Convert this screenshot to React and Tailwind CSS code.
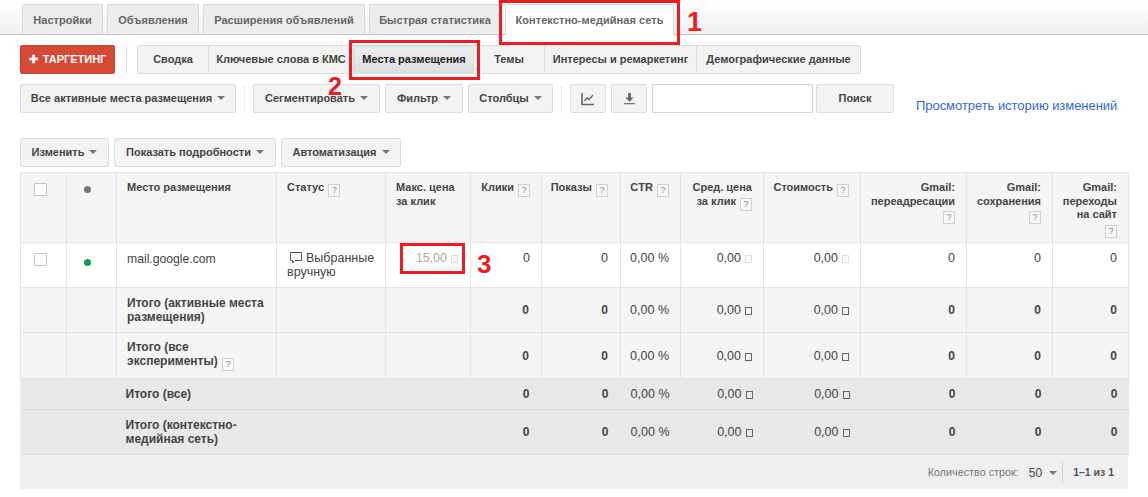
import React from "react";

const tabs = [
  { label: "Настройки", w: "w-[81px]" },
  { label: "Объявления", w: "w-[92px]" },
  { label: "Расширения объявлений", w: "w-[162px]" },
  { label: "Быстрая статистика", w: "w-[132px]" },
  { label: "Контекстно-медийная сеть", w: "w-[169px]", active: true },
];

const subTabs = [
  { label: "Сводка", w: "w-[71px]" },
  { label: "Ключевые слова в КМС", w: "w-[145px]" },
  { label: "Места размещения", w: "w-[120px]", active: true },
  { label: "Темы", w: "w-[71px]" },
  { label: "Интересы и ремаркетинг", w: "w-[152px]" },
  { label: "Демографические данные", w: "w-[163px]" },
];

const totals = [
  { label: <>Итого (активные места<br />размещения)</>, h: "h-[45px]", tone: "light" },
  { label: <>Итого (все<br />эксперименты) <Help /></>, h: "h-[46px]", tone: "light" },
  { label: "Итого (все)", h: "h-[31px]", tone: "dark" },
  { label: <>Итого (контекстно-<br />медийная сеть)</>, h: "h-[45px]", tone: "dark" },
];

function Help() {
  return (
    <span className="inline-flex w-[12px] h-[13px] items-center justify-center border border-[#d0d0d0] bg-[#f8f8f8] text-[9px] leading-none font-normal text-[#888] align-[-2px] ml-[1px]">
      ?
    </span>
  );
}

function Tofu({ faint }) {
  return (
    <span
      className={`inline-block w-[7px] h-[8px] border ml-[4px] align-[-1px] ${
        faint ? "border-[#dcdcdc]" : "border-[#666]"
      }`}
    />
  );
}

function Caret() {
  return <span className="inline-block ml-[5px] border-x-[4px] border-t-[4px] border-x-transparent border-t-[#777] align-[2px]" />;
}

function Btn({ w, children }) {
  return (
    <button className={`${w} h-[29px] shrink-0 rounded-[2px] border border-[#dcdcdc] bg-[#f3f3f3] text-[11px] font-bold text-[#444]`}>
      {children}
    </button>
  );
}

function Check() {
  return <span className="block w-[13px] h-[13px] ml-[13px] border border-[#c4c4c4] bg-white rounded-[1px]" />;
}

const cell = "border border-[#e4e4e4] align-top";
const num = "text-[12.5px] text-right pt-[8px]";

export default function App() {
  return (
    <div className="relative w-[1148px] h-[497px] overflow-hidden bg-white font-['Liberation_Sans',Arial,sans-serif]">
      {/* tabs */}
      <div className="flex items-end gap-[4px] h-[35px] pl-[22px] border-b border-[#c8c8c8] bg-gradient-to-b from-white to-[#f0f0f0]">
        {tabs.map((tab) => (
          <div
            key={tab.label}
            className={`${tab.w} h-[30px] pt-[1px] flex items-center justify-center border border-b-0 border-[#d8d8d8] rounded-t-[2px] text-[11px] font-bold tracking-[0.05px] text-[#666] ${
              tab.active ? "bg-white h-[31px] -mb-[1px]" : "bg-[#ececec]"
            }`}
          >
            {tab.label}
          </div>
        ))}
      </div>

      {/* targeting + sub tabs */}
      <div className="flex items-stretch h-[29px] mt-[10px] ml-[20px]">
        <button className="w-[95px] rounded-[2px] bg-[#d64937] border border-[#c8432f] text-white text-[11px] font-bold flex items-center justify-center gap-[5px]">
          <span className="text-[11px] leading-none">✚</span>ТАРГЕТИНГ
        </button>
        <div className="w-px bg-[#e4e4e4] ml-[11px] mr-[10px]" />
        <div className="flex rounded-[2px] border border-[#dcdcdc] bg-[#f3f3f3]">
          {subTabs.map((tab) => (
            <div
              key={tab.label}
              className={`${tab.w} flex items-center justify-center border-r last:border-r-0 border-[#dcdcdc] text-[11px] font-bold ${
                tab.active
                  ? "bg-gradient-to-b from-[#eeeeee] to-[#dedede] text-[#222] border border-[#c4c4c4]"
                  : "text-[#444]"
              }`}
            >
              {tab.label}
            </div>
          ))}
        </div>
      </div>

      {/* filters */}
      <div className="flex items-start h-[29px] mt-[10px] ml-[20px]">
        <Btn w="w-[216px]">Все активные места размещения<Caret /></Btn>
        <div className="w-px h-[29px] bg-[#ececec] ml-[8px] mr-[8px]" />
        <Btn w="w-[127px]">Сегментировать<Caret /></Btn>
        <div className="w-[5px]" />
        <Btn w="w-[78px]">Фильтр<Caret /></Btn>
        <div className="w-[5px]" />
        <Btn w="w-[85px]">Столбцы<Caret /></Btn>
        <div className="w-px h-[29px] bg-[#ececec] ml-[8px] mr-[8px]" />
        <Btn w="w-[36px]">
          <svg viewBox="0 0 14 14" className="w-[14px] h-[14px] mx-auto" fill="none" stroke="#666" strokeWidth="1.3">
            <path d="M1 1v11.5h12" strokeWidth="1.6" />
            <path d="M3.5 9l2.5-3 2 1.5L12 3" />
          </svg>
        </Btn>
        <div className="w-[5px]" />
        <Btn w="w-[36px]">
          <svg viewBox="0 0 14 14" className="w-[13px] h-[13px] mx-auto" fill="#666">
            <path d="M5.500 1h3v5h3L7 10.500 2.500 6h3z" />
            <rect x="1" y="12" width="12" height="1.2" />
          </svg>
        </Btn>
        <div className="w-[5px]" />
        <input className="w-[161px] h-[29px] border border-[#d4d4d4] bg-white outline-none" />
        <div className="w-[3px]" />
        <Btn w="w-[78px]">Поиск</Btn>
        <a className="ml-[22px] mt-[14px] text-[13px] tracking-[-0.05px] leading-[15px] text-[#3367d6] whitespace-nowrap">
          Просмотреть историю изменений
        </a>
      </div>

      {/* bulk actions */}
      <div className="flex gap-[5px] h-[29px] mt-[25px] ml-[20px]">
        <Btn w="w-[89px]">Изменить<Caret /></Btn>
        <Btn w="w-[162px]">Показать подробности<Caret /></Btn>
        <Btn w="w-[120px]">Автоматизация<Caret /></Btn>
      </div>

      {/* table */}
      <div className="ml-[20px] mt-[5px] w-[1108px] bg-[#efefef] h-[317px]">
        <table className="table-fixed w-[1108px] border-collapse text-[12px] leading-[14px]">
          <colgroup>
            <col className="w-[46px]" /><col className="w-[50px]" /><col className="w-[160px]" /><col className="w-[109px]" />
            <col className="w-[85px]" /><col className="w-[71px]" /><col className="w-[79px]" /><col className="w-[60px]" />
            <col className="w-[83px]" /><col className="w-[97px]" /><col className="w-[106px]" /><col className="w-[86px]" /><col className="w-[76px]" />
          </colgroup>
          <thead>
            <tr className="h-[70px] bg-[#f5f5f5] text-[11px] leading-[13.5px] font-bold text-[#444]">
              <th className={`${cell} pt-[10px]`}><Check /></th>
              <th className={`${cell} pt-[13px]`}><span className="block w-[7px] h-[7px] ml-[17px] rounded-full bg-[#757575]" /></th>
              <th className={`${cell} text-left pl-[10px] pt-[8px]`}>Место размещения</th>
              <th className={`${cell} text-left pl-[10px] pt-[8px]`}>Статус <Help /></th>
              <th className={`${cell} text-left pl-[10px] pt-[8px]`}>Макс. цена<br />за клик</th>
              <th className={`${cell} text-right pr-[11px] pt-[8px]`}>Клики <Help /></th>
              <th className={`${cell} text-right pr-[12px] pt-[8px]`}>Показы <Help /></th>
              <th className={`${cell} text-right pr-[11px] pt-[8px]`}>CTR <Help /></th>
              <th className={`${cell} text-right pr-[11px] pt-[8px]`}>Сред. цена<br />за клик <Help /></th>
              <th className={`${cell} text-right pr-[11px] pt-[8px]`}>Стоимость <Help /></th>
              <th className={`${cell} text-right pr-[11px] pt-[8px]`}>Gmail:<br />переадресации<br /><Help /></th>
              <th className={`${cell} text-right pr-[11px] pt-[8px]`}>Gmail:<br />сохранения<br /><Help /></th>
              <th className={`${cell} text-right pr-[11px] pt-[8px]`}>Gmail:<br />переходы<br />на сайт<br /><Help /></th>
            </tr>
          </thead>
          <tbody>
            <tr className="h-[45px] bg-white text-[#444]">
              <td className={`${cell} pt-[10px]`}><Check /></td>
              <td className={`${cell} pt-[16px]`}><span className="block w-[7px] h-[7px] ml-[17px] rounded-full bg-[#0f9d58]" /></td>
              <td className={`${cell} pl-[10px] pt-[9px] text-[12.2px]`}>mail.google.com</td>
              <td className={`${cell} pl-[10px] pt-[8px] text-[12.5px]`}>
                <svg viewBox="0 0 12 12" className="inline-block w-[12px] h-[12px] ml-[3px] mr-[4px] align-[-2px]" fill="none" stroke="#555">
                  <path d="M.5.5h11v8H5L2.500 11V8.500H.5z" />
                </svg>
                Выбранные<br />вручную
              </td>
              <td className={`${cell} ${num} pr-[12px] text-[#aaa]`}>15,00<Tofu faint /></td>
              <td className={`${cell} ${num} pr-[11px]`}>0</td>
              <td className={`${cell} ${num} pr-[12px]`}>0</td>
              <td className={`${cell} ${num} pr-[11px]`}>0,00 %</td>
              <td className={`${cell} ${num} pr-[11px]`}>0,00<Tofu faint /></td>
              <td className={`${cell} ${num} pr-[11px]`}>0,00<Tofu faint /></td>
              <td className={`${cell} ${num} pr-[11px]`}>0</td>
              <td className={`${cell} ${num} pr-[11px]`}>0</td>
              <td className={`${cell} ${num} pr-[11px]`}>0</td>
            </tr>
            {totals.map((row, i) => {
              const dark = row.tone === "dark";
              const c = dark
                ? "border-y border-[#dadada] align-middle"
                : "border border-[#e4e4e4] align-middle";
              return (
                <tr key={i} className={`${row.h} font-bold text-[#444] ${dark ? "bg-[#e8e8e8]" : "bg-[#f5f5f5]"}`}>
                  <td className={c} />
                  <td className={c} />
                  <td className={`${c} ${dark ? "pl-[9px]" : "pl-[10px]"}`}>{row.label}</td>
                  <td className={c} />
                  <td className={c} />
                  <td className={`${c} text-right pr-[12px]`}>0</td>
                  <td className={`${c} text-right pr-[12px]`}>0</td>
                  <td className={`${c} text-right pr-[11px] font-normal text-[12.5px]`}>0,00 %</td>
                  <td className={`${c} text-right pr-[11px] font-normal text-[12.5px]`}>0,00<Tofu /></td>
                  <td className={`${c} text-right pr-[11px] font-normal text-[12.5px]`}>0,00<Tofu /></td>
                  <td className={`${c} text-right pr-[11px]`}>0</td>
                  <td className={`${c} text-right pr-[11px]`}>0</td>
                  <td className={`${c} text-right pr-[11px]`}>0</td>
                </tr>
              );
            })}
          </tbody>
        </table>

        {/* pager */}
        <div className="flex items-center justify-end h-[35px] pr-[14px] text-[10.8px] text-[#777]">
          <span>Количество строк:</span>
          <span className="ml-[10px] text-[12px] text-[#444]">50</span>
          <span className="ml-[7px] border-x-[4px] border-t-[4px] border-x-transparent border-t-[#777]" />
          <span className="w-px h-[22px] bg-[#d4d4d4] ml-[5px] mr-[10px]" />
          <span className="font-bold text-[10.5px] text-[#555]">1–1 из 1</span>
        </div>
      </div>

      {/* annotations */}
      <div className="absolute left-[499px] top-0 w-[181px] h-[45px] border-[3px] border-[#ed1c24]" />
      <div className="absolute left-[687px] top-[6px] text-[27px] leading-[32px] font-bold text-[#ed1c24]">1</div>
      <div className="absolute left-[349px] top-[40px] w-[131px] h-[40px] border-[3px] border-[#ed1c24]" />
      <div className="absolute left-[328px] top-[71px] text-[25px] leading-[30px] font-bold text-[#ed1c24]">2</div>
      <div className="absolute left-[400px] top-[243px] w-[65px] h-[31px] border-[3px] border-[#ed1c24]" />
      <div className="absolute left-[477px] top-[249px] text-[26px] leading-[30px] font-bold text-[#ed1c24]">3</div>
    </div>
  );
}
